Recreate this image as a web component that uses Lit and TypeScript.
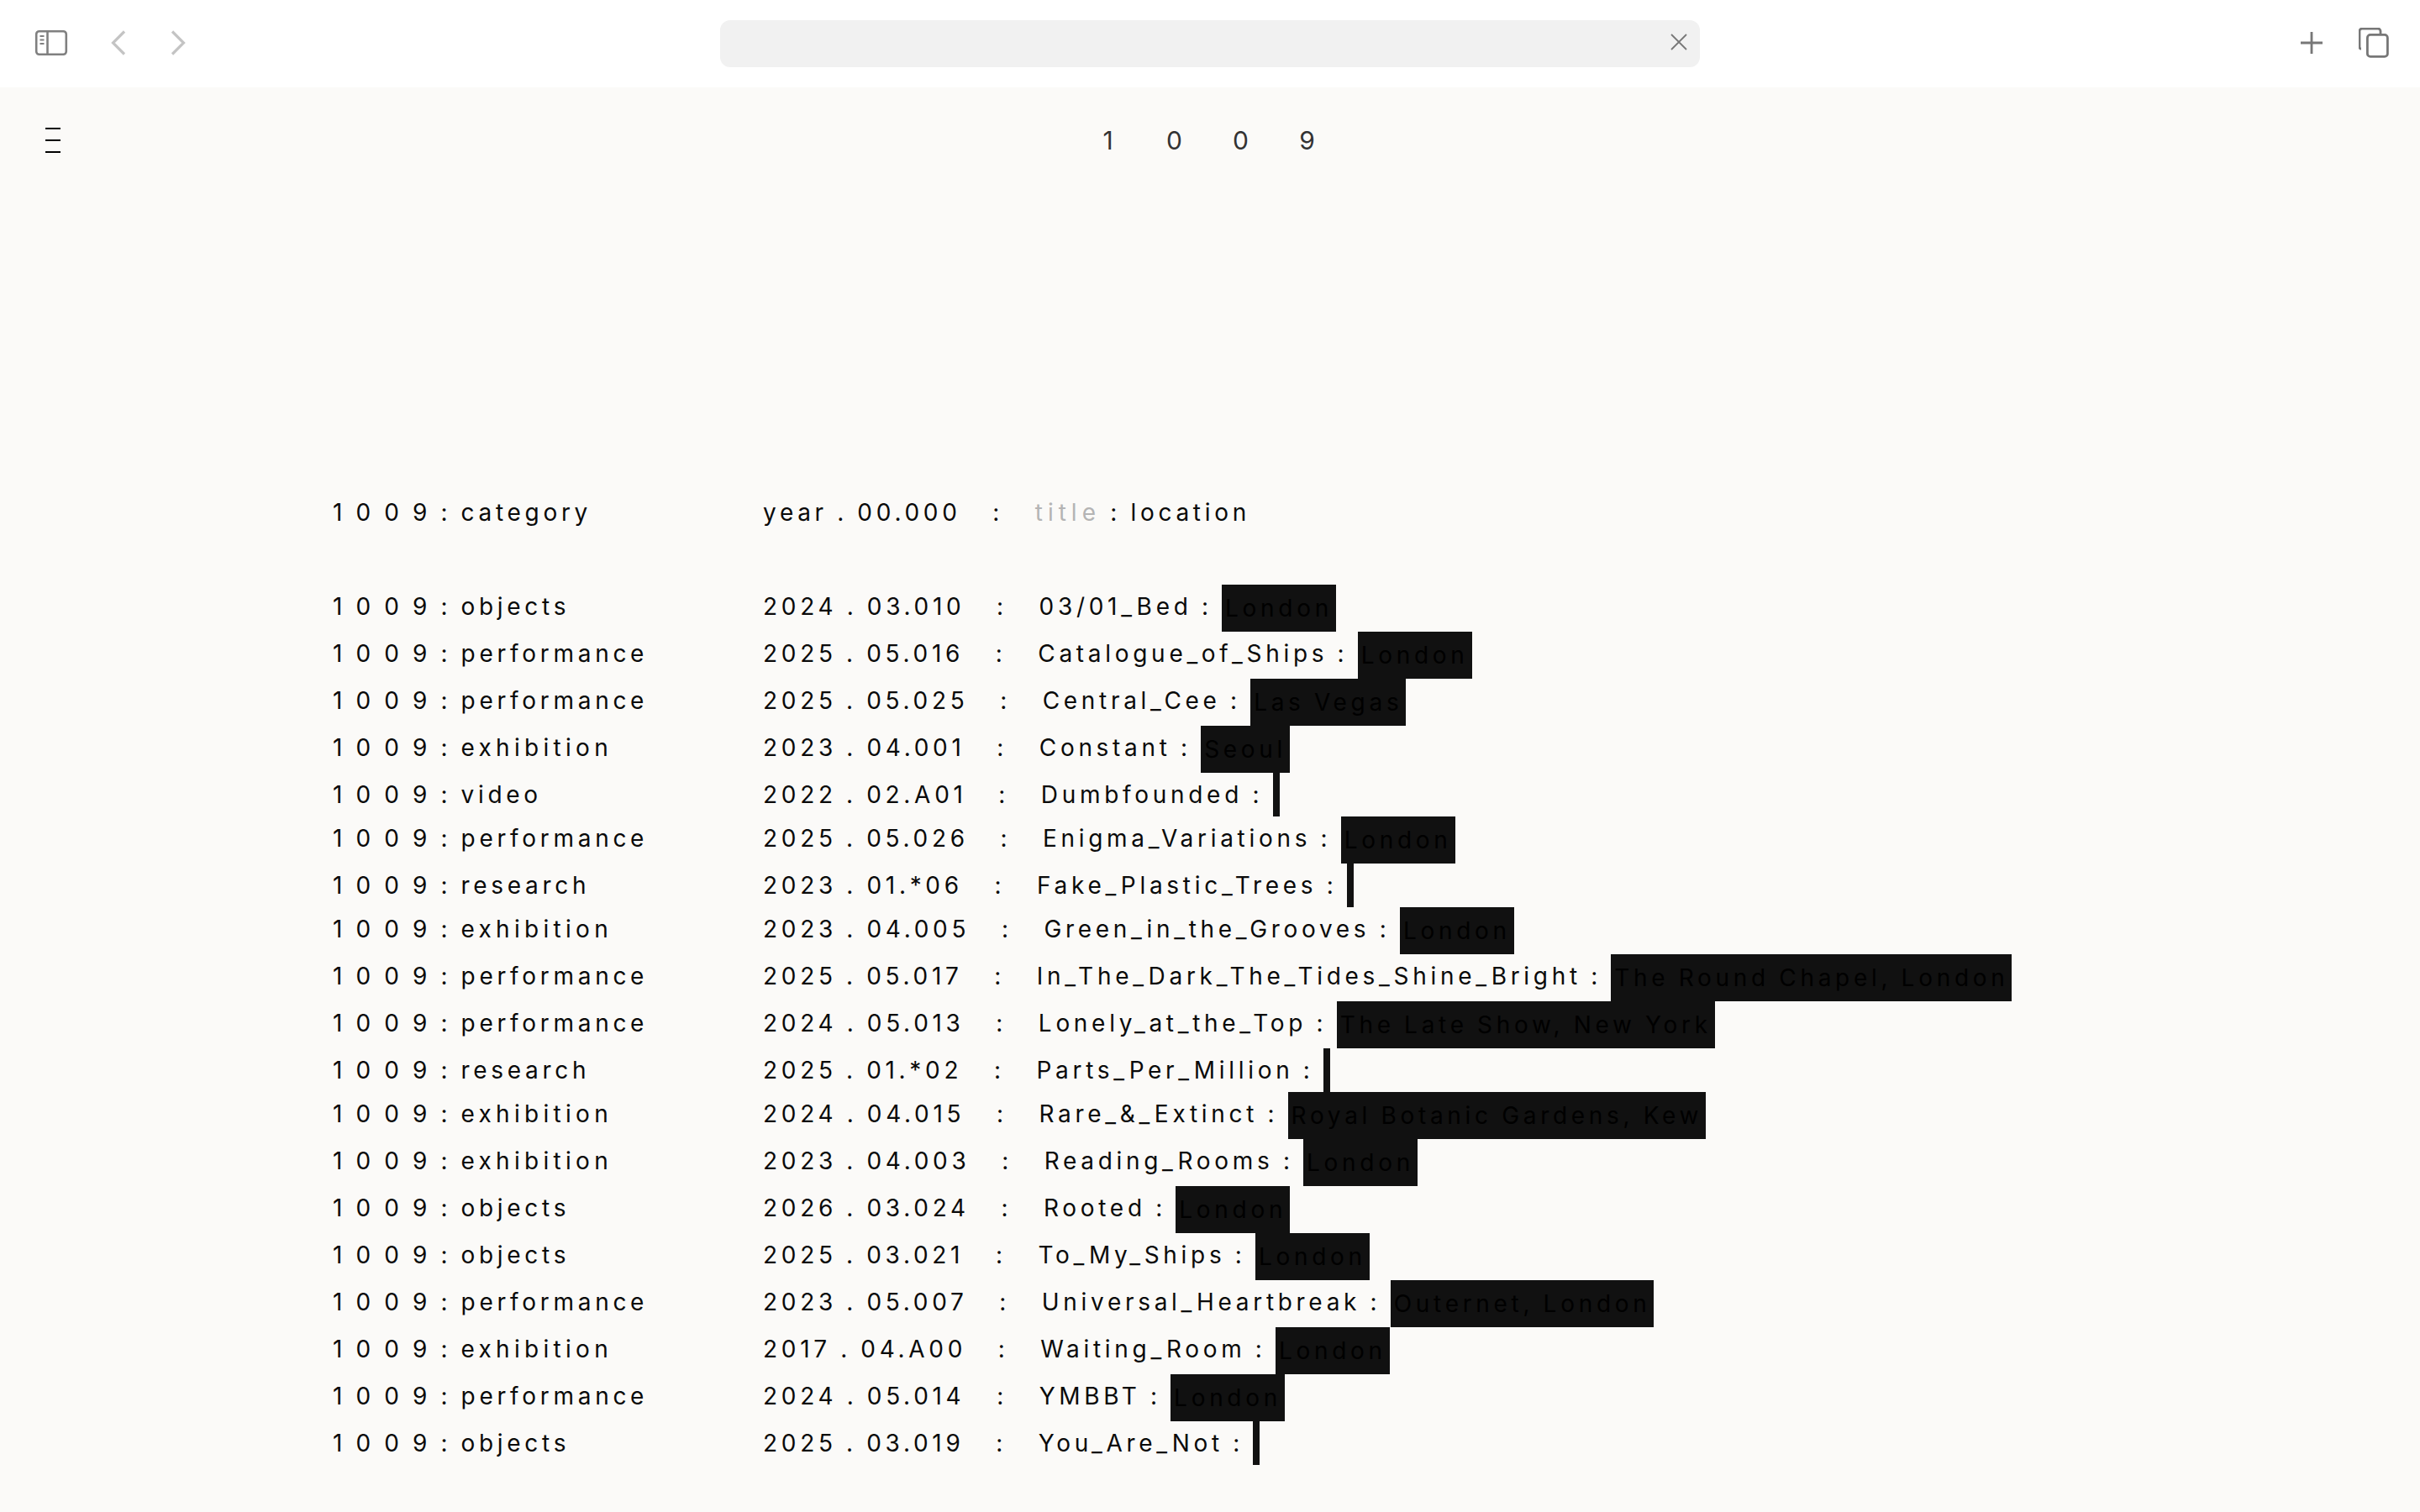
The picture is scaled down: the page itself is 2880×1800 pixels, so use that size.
import { LitElement, html, css } from "lit";
import { customElement } from "lit/decorators.js";
import { classMap } from "lit/directives/class-map.js";

const ROWS: [string, string, string, string][] = [
  ["objects", "2024 . 03.010", "03/01_Bed", "London"],
  ["performance", "2025 . 05.016", "Catalogue_of_Ships", "London"],
  ["performance", "2025 . 05.025", "Central_Cee", "Las Vegas"],
  ["exhibition", "2023 . 04.001", "Constant", "Seoul"],
  ["video", "2022 . 02.A01", "Dumbfounded", ""],
  ["performance", "2025 . 05.026", "Enigma_Variations", "London"],
  ["research", "2023 . 01.*06", "Fake_Plastic_Trees", ""],
  ["exhibition", "2023 . 04.005", "Green_in_the_Grooves", "London"],
  ["performance", "2025 . 05.017", "In_The_Dark_The_Tides_Shine_Bright", "The Round Chapel, London"],
  ["performance", "2024 . 05.013", "Lonely_at_the_Top", "The Late Show, New York"],
  ["research", "2025 . 01.*02", "Parts_Per_Million", ""],
  ["exhibition", "2024 . 04.015", "Rare_&_Extinct", "Royal Botanic Gardens, Kew"],
  ["exhibition", "2023 . 04.003", "Reading_Rooms", "London"],
  ["objects", "2026 . 03.024", "Rooted", "London"],
  ["objects", "2025 . 03.021", "To_My_Ships", "London"],
  ["performance", "2023 . 05.007", "Universal_Heartbreak", "Outernet, London"],
  ["exhibition", "2017 . 04.A00", "Waiting_Room", "London"],
  ["performance", "2024 . 05.014", "YMBBT", "London"],
  ["objects", "2025 . 03.019", "You_Are_Not", ""],
];

@customElement("app-root")
export class AppRoot extends LitElement {
  static styles = css`
    :host { display: block; width: 2880px; min-height: 1800px; background: #fbfaf8; color: #0a0a0a; font-family: Inter, "Liberation Sans", sans-serif; }
    .toolbar { height: 104px; background: #fff; display: grid; grid-template-columns: 857px 1166px 1fr; align-items: center; }
    .nav { display: flex; align-items: center; padding: 0 0 2px 41px; }
    .nav svg { display: block; }
    .chev1 { margin-left: 51px; }
    .chev2 { margin-left: 53px; }
    .search { height: 56px; border-radius: 12px; background: #f1f1f1; display: flex; align-items: center; justify-content: flex-end; padding: 0 15px 4px 0; box-sizing: border-box; }
    .actions { display: flex; align-items: center; justify-content: flex-end; padding: 0 37px 2px 0; gap: 42px; }
    .top { display: grid; grid-template-columns: 54px 18px 1fr 72px; align-items: start; padding-top: 48px; height: 84px; }
    .burger { display: flex; flex-direction: column; gap: 12px; }
    .burger i { display: block; height: 2px; background: #000; }
    .logo { display: flex; justify-content: center; font-size: 30px; line-height: 30px; color: #333; grid-column: 3; padding-right: 6px; }
    .logo span { width: 79px; text-align: center; }
    .list { padding: 348px 0 0 396px; }
    .row { display: flex; align-items: stretch; font-size: 28px; letter-spacing: 4.7px; word-spacing: -1.2px; line-height: 52px; white-space: pre; }
    .head { margin-bottom: 56px; height: 56px; }
    .cat { width: 512px; flex: none; }
    .sep { word-spacing: 0; }
    .wide { letter-spacing: 5.3px; }
    .muted { color: #b4b4b4; letter-spacing: 6px; }
    .hl { background: #111; color: #000; padding: 0 4px; line-height: 56px; }
  `;

  render() {
    return html`
      <div class="toolbar">
        <div class="nav">
          <svg width="40" height="32" viewBox="0 0 40 32" fill="none" stroke="#808080">
            <rect x="2.2" y="2.2" width="35.6" height="27.6" rx="3.5" stroke-width="2.6"/>
            <path d="M15.5 2v28" stroke-width="2.6"/>
            <path d="M6.5 8h5M6.5 12.5h5M6.5 17h5" stroke-width="2"/>
          </svg>
          <svg class="chev1" width="18" height="30" viewBox="0 0 18 30" fill="none" stroke="#c4c4c4" stroke-width="3.2"><path d="M16 1.500 2.500 15 16 28.500"/></svg>
          <svg class="chev2" width="18" height="30" viewBox="0 0 18 30" fill="none" stroke="#c4c4c4" stroke-width="3.2"><path d="M2 1.500 15.500 15 2 28.500"/></svg>
        </div>
        <div class="search">
          <svg width="20" height="20" viewBox="0 0 20 20" fill="none" stroke="#777" stroke-width="1.800"><path d="M1 1l18 18M19 1 1 19"/></svg>
        </div>
        <div class="actions">
          <svg width="28" height="28" viewBox="0 0 28 28" fill="none" stroke="#777" stroke-width="2.800"><path d="M14 1v26M1 14h26"/></svg>
          <svg width="36" height="36" viewBox="0 0 36 36" fill="none" stroke="#777" stroke-width="2.800">
            <path d="M3 25H2.500a1.500 1.500 0 0 1-1.500-1.500V4a3 3 0 0 1 3-3h19a3 3 0 0 1 3 3v3" />
            <rect x="10.400" y="8.400" width="24" height="26" rx="3.500"/>
          </svg>
        </div>
      </div>
      <div class="top">
        <div></div>
        <div class="burger"><i></i><i></i><i></i></div>
        <div class="logo"><span>1</span><span>0</span><span>0</span><span>9</span></div>
      </div>
      <div class="list">
        <div class="row head">
          <div class="cat">1 0 0 9 : category</div>
          <div>year . 00.000<span class="sep">   :   </span><span class="muted">title</span> : location</div>
        </div>
        ${ROWS.map(([c, d, t, l]) => html`
          <div class="row">
            <div class="cat">1 0 0 9 : <span class=${classMap({ wide: c === "exhibition" })}>${c}</span></div>
            <div>${d}<span class="sep">   :   </span>${t} : </div>
            <div class="hl">${l}</div>
          </div>`)}
      </div>
    `;
  }
}
